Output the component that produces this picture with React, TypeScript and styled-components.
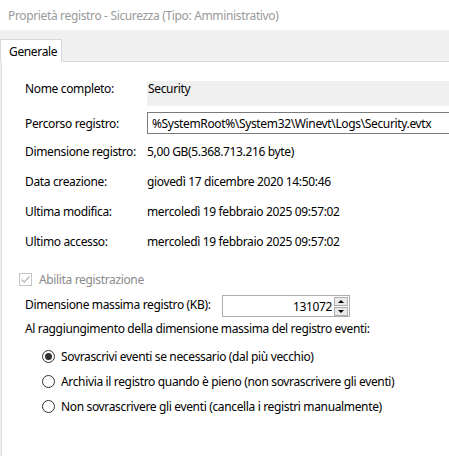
import styled, { createGlobalStyle } from "styled-components";

const GlobalStyle = createGlobalStyle`
  html, body {
    margin: 0;
    padding: 0;
    background: #ffffff;
  }
  body {
    font-family: "Noto Sans", "Open Sans", sans-serif;
    font-size: 12px;
    letter-spacing: -0.35px;
    color: #000000;
  }
`;

const StyledWindow = styled.div`
  width: 449px;
  height: 456px;
  overflow: hidden;
  display: flex;
  flex-direction: column;
  background: #ffffff;
`;

const StyledTitleBar = styled.div`
  height: 30px;
  display: flex;
  align-items: center;
  padding-left: 8px;
  color: #999999;
  font-size: 12px;
  white-space: nowrap;
`;

const StyledTabArea = styled.div`
  flex: 1;
  display: flex;
  flex-direction: column;
  background: #f0f0f0;
  padding-top: 9px;
  padding-left: 1px;
`;

const StyledTabStrip = styled.div`
  display: flex;
  height: 22px;
`;

const StyledTab = styled.div`
  width: 62px;
  display: flex;
  align-items: center;
  padding-left: 8px;
  box-sizing: border-box;
  background: #ffffff;
  border: 1px solid #d9d9d9;
  border-bottom: none;
  margin-left: -1px;
  position: relative;
  z-index: 1;
  height: 23px;
`;

const StyledPanel = styled.div`
  flex: 1;
  background: #ffffff;
  border-top: 1px solid #d9d9d9;
  border-left: 1px solid #d9d9d9;
  padding: 19px 0 0 23px;
  display: flex;
  flex-direction: column;
`;

const StyledInfoRow = styled.div<{ $height: number; $gap?: number }>`
  display: grid;
  grid-template-columns: 122px 1fr;
  align-items: center;
  height: ${(p) => p.$height}px;
  margin-top: ${(p) => p.$gap ?? 0}px;
  white-space: nowrap;
`;

const StyledTopLabel = styled.span`
  align-self: flex-start;
  line-height: 16px;
`;

const StyledReadOnlyBox = styled.div`
  align-self: stretch;
  background: #f0f0f0;
  margin-right: -40px;
  padding-left: 1px;
  line-height: 16px;
`;

const StyledPathInput = styled.div`
  align-self: stretch;
  border: 1px solid #7a7a7a;
  border-right: none;
  margin-right: -40px;
  padding-left: 4px;
  display: flex;
  align-items: center;
`;

const StyledCheckRow = styled.label`
  display: flex;
  align-items: center;
  gap: 7px;
  height: 22px;
  margin-top: 12px;
  margin-left: -6px;
  color: #8a8a8a;
`;

const StyledCheckBox = styled.span`
  width: 13px;
  height: 13px;
  box-sizing: border-box;
  border: 1px solid #c6c6c6;
  background: #ffffff;
  display: flex;
  align-items: center;
  justify-content: center;
`;

const StyledSpinRow = styled.div`
  display: flex;
  align-items: center;
  height: 22px;
  margin-top: 5px;
`;

const StyledSpinLabel = styled.span`
  width: 197px;
  white-space: nowrap;
  margin-top: -4px;
`;

const StyledSpinBox = styled.div`
  width: 128px;
  height: 22px;
  box-sizing: border-box;
  border: 1px solid #adadad;
  display: flex;
  align-items: center;
  background: #ffffff;
`;

const StyledSpinValue = styled.span`
  flex: 1;
  text-align: right;
  padding-right: 2px;
`;

const StyledSpinButtons = styled.div`
  display: flex;
  flex-direction: column;
  gap: 1px;
  margin-right: 1px;
`;

const StyledSpinButton = styled.div`
  width: 14px;
  height: 9px;
  box-sizing: border-box;
  border: 1px solid #adadad;
  background: #e9e9e9;
  display: flex;
  align-items: center;
  justify-content: center;
`;

const StyledArrow = styled.span<{ $up?: boolean }>`
  width: 0;
  height: 0;
  border-left: 3px solid transparent;
  border-right: 3px solid transparent;
  ${(p) =>
    p.$up ? "border-bottom: 3px solid #000;" : "border-top: 3px solid #000;"}
`;

const StyledSectionText = styled.div`
  height: 16px;
  line-height: 16px;
  margin-top: 4px;
  white-space: nowrap;
`;

const StyledRadioGroup = styled.div`
  display: flex;
  flex-direction: column;
  margin-top: 7px;
  padding-left: 17px;
`;

const StyledRadioRow = styled.label`
  display: flex;
  align-items: center;
  gap: 6px;
  height: 25px;
  white-space: nowrap;
`;

const StyledRadio = styled.span<{ $checked?: boolean }>`
  width: 13px;
  height: 13px;
  box-sizing: border-box;
  border: 1px solid #333333;
  border-radius: 50%;
  background: #ffffff;
  display: flex;
  align-items: center;
  justify-content: center;

  &::after {
    content: "";
    width: 7px;
    height: 7px;
    border-radius: 50%;
    background: ${(p) => (p.$checked ? "#333333" : "transparent")};
  }
`;

const infoRows = [
  { label: "Dimensione registro:", value: "5,00 GB(5.368.713.216 byte)" },
  { label: "Data creazione:", value: "giovedì 17 dicembre 2020 14:50:46" },
  { label: "Ultima modifica:", value: "mercoledì 19 febbraio 2025 09:57:02" },
  { label: "Ultimo accesso:", value: "mercoledì 19 febbraio 2025 09:57:02" },
];

const radioOptions = [
  { text: "Sovrascrivi eventi se necessario (dal più vecchio)", checked: true },
  { text: "Archivia il registro quando è pieno (non sovrascrivere gli eventi)" },
  { text: "Non sovrascrivere gli eventi (cancella i registri manualmente)" },
];

const App = () => {
  return (
    <>
      <GlobalStyle />
      <StyledWindow>
        <StyledTitleBar>
          Proprietà registro - Sicurezza (Tipo: Amministrativo)
        </StyledTitleBar>
        <StyledTabArea>
          <StyledTabStrip>
            <StyledTab>Generale</StyledTab>
          </StyledTabStrip>
          <StyledPanel>
            <StyledInfoRow $height={25}>
              <StyledTopLabel>Nome completo:</StyledTopLabel>
              <StyledReadOnlyBox>Security</StyledReadOnlyBox>
            </StyledInfoRow>
            <StyledInfoRow $height={22} $gap={6}>
              <span>Percorso registro:</span>
              <StyledPathInput>
                %SystemRoot%\System32\Winevt\Logs\Security.evtx
              </StyledPathInput>
            </StyledInfoRow>
            {infoRows.map((row, i) => (
              <StyledInfoRow key={row.label} $height={30} $gap={i === 0 ? 2 : 0}>
                <span>{row.label}</span>
                <span>{row.value}</span>
              </StyledInfoRow>
            ))}
            <StyledCheckRow>
              <StyledCheckBox>
                <svg width="11" height="11" viewBox="0 0 11 11">
                  <path
                    d="M1.5 5.5 L4.2 8.2 L9.5 2.5"
                    fill="none"
                    stroke="#b5b5b5"
                    strokeWidth="1.2"
                  />
                </svg>
              </StyledCheckBox>
              Abilita registrazione
            </StyledCheckRow>
            <StyledSpinRow>
              <StyledSpinLabel>Dimensione massima registro (KB):</StyledSpinLabel>
              <StyledSpinBox>
                <StyledSpinValue>131072</StyledSpinValue>
                <StyledSpinButtons>
                  <StyledSpinButton>
                    <StyledArrow $up />
                  </StyledSpinButton>
                  <StyledSpinButton>
                    <StyledArrow />
                  </StyledSpinButton>
                </StyledSpinButtons>
              </StyledSpinBox>
            </StyledSpinRow>
            <StyledSectionText>
              Al raggiungimento della dimensione massima del registro eventi:
            </StyledSectionText>
            <StyledRadioGroup>
              {radioOptions.map((opt) => (
                <StyledRadioRow key={opt.text}>
                  <StyledRadio $checked={opt.checked} />
                  {opt.text}
                </StyledRadioRow>
              ))}
            </StyledRadioGroup>
          </StyledPanel>
        </StyledTabArea>
      </StyledWindow>
    </>
  );
};

export default App;
